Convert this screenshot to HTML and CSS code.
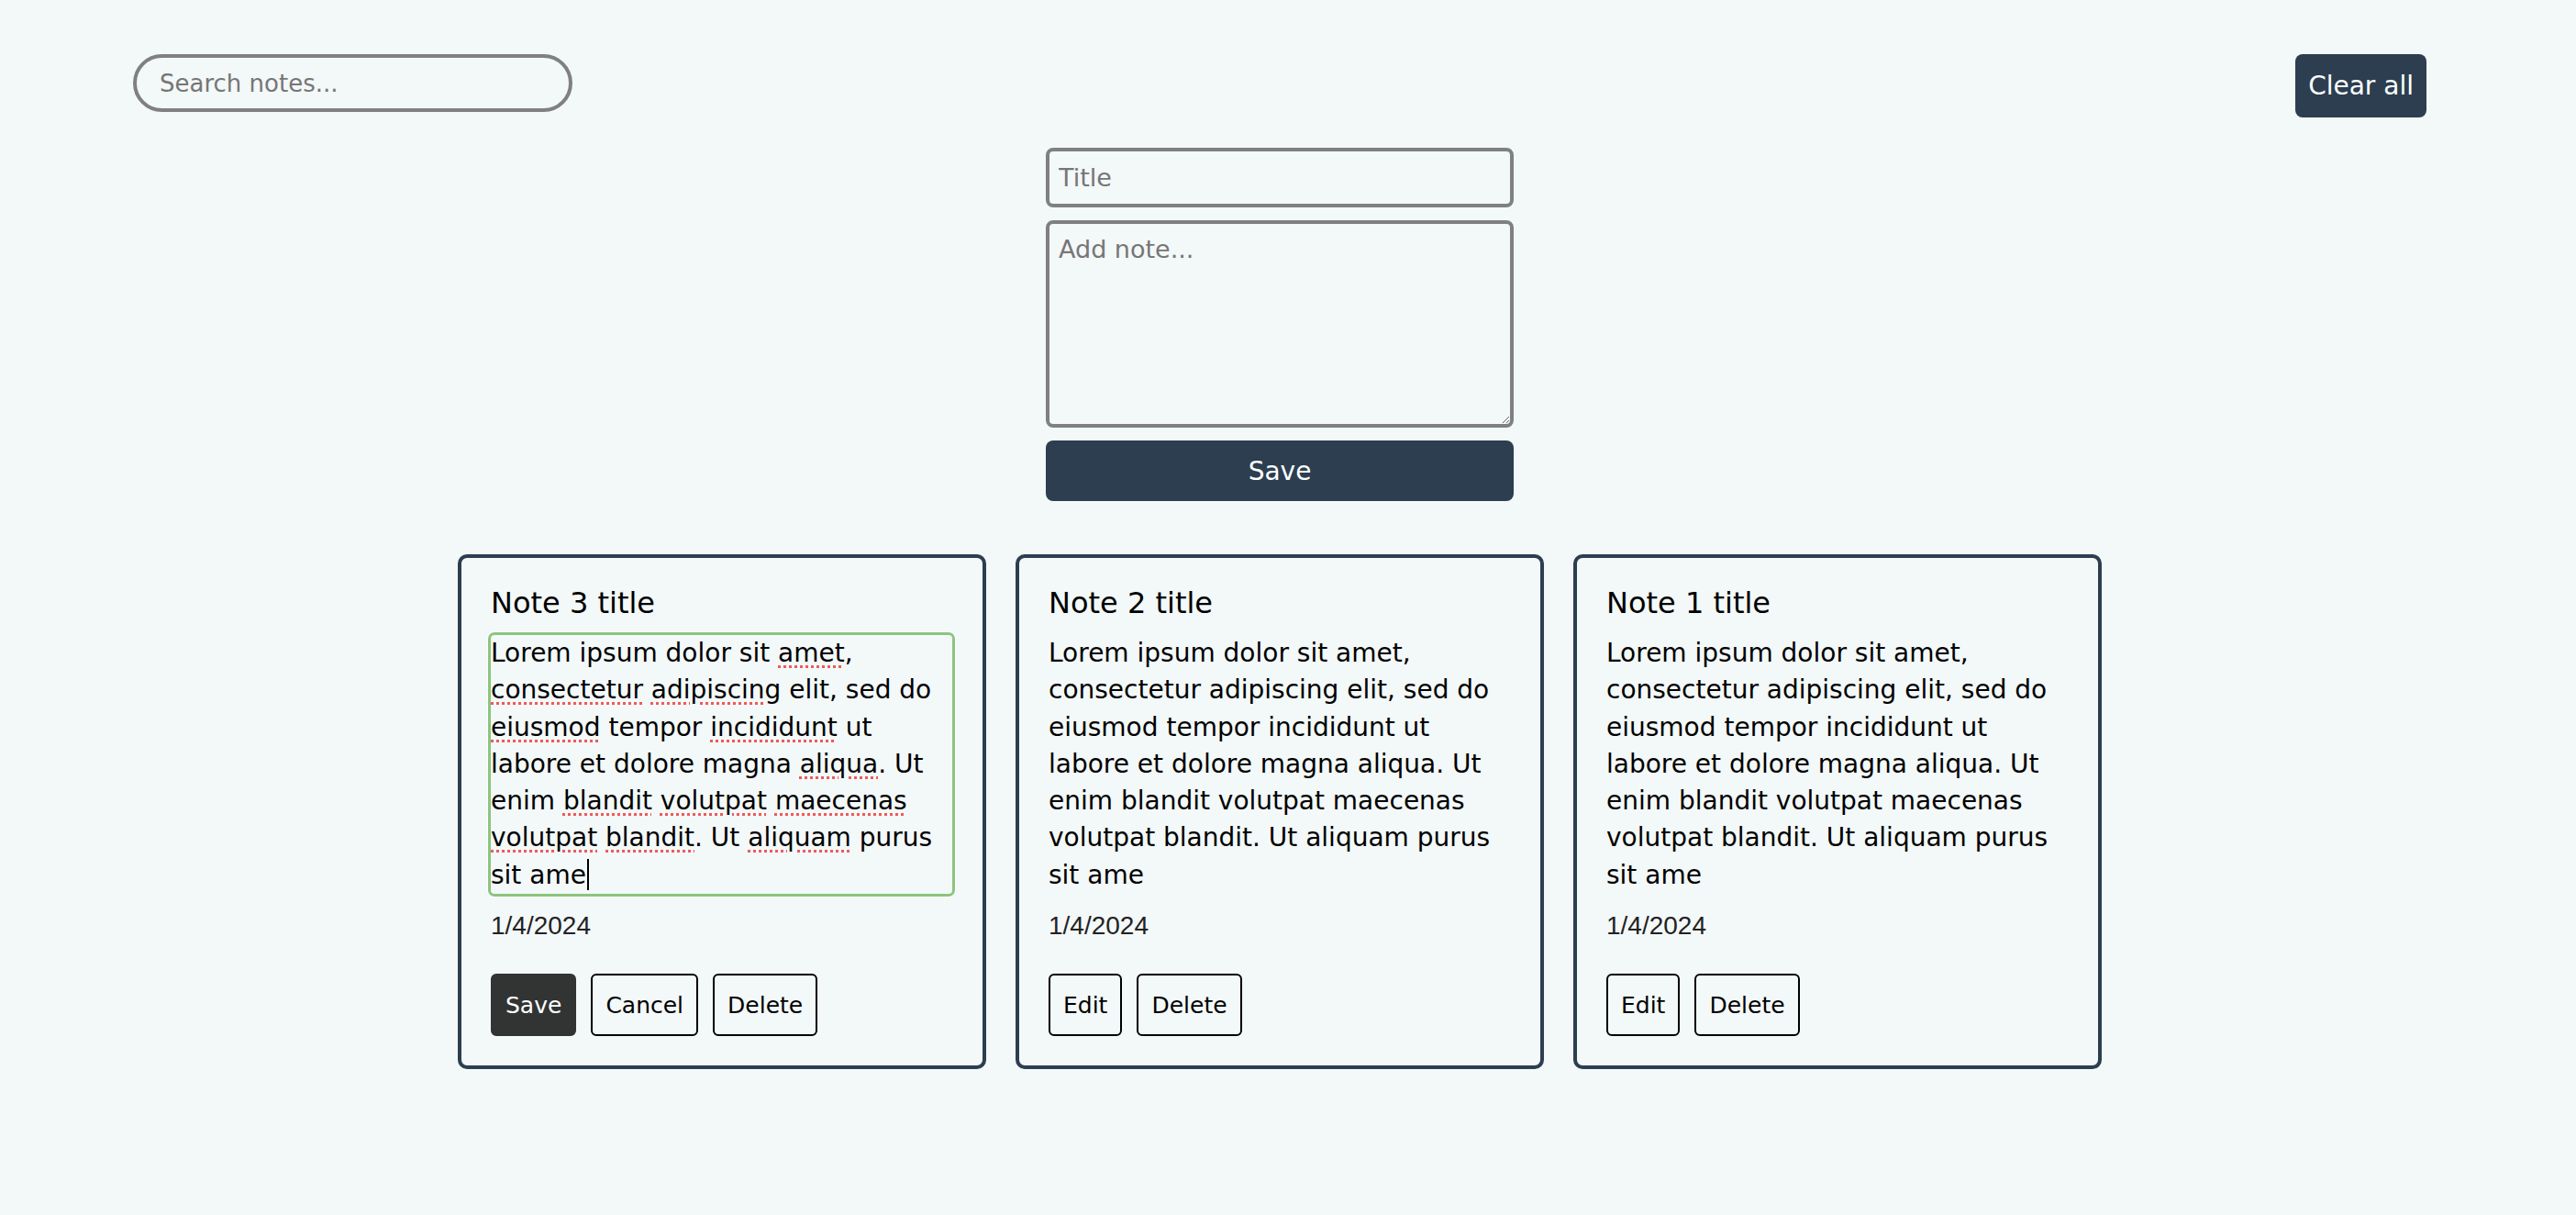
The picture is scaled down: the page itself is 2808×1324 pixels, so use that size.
FILE: index.html
```html
<!DOCTYPE html>
<html lang="en">
<head>
    <meta charset="UTF-8">
    <meta name="viewport" content="width=device-width, initial-scale=1.0">
    <title>Notes</title>
    <link rel="stylesheet" href="styles.css">
</head>
<body>

    <div class="app">
        <div class="topbar">
            <input type="text" class="search" placeholder="Search notes..." autocomplete="off">
            <button class="clear-btn">Clear all</button>
        </div>

        <div class="note-form">
            <input type="text" class="title-input" placeholder="Title">
            <textarea class="note-input" placeholder="Add note..."></textarea>
            <button class="save-btn">Save</button>
        </div>

        <div class="notes">
            <div class="note">
                <h3 class="note-title">Note 3 title</h3>
                <div class="note-text editing">Lorem ipsum dolor sit <span class="typo">amet</span>, <span class="typo">consectetur</span> <span class="typo">adipiscing</span> elit, sed do <span class="typo">eiusmod</span> tempor <span class="typo">incididunt</span> ut labore et dolore magna <span class="typo">aliqua</span>. Ut enim <span class="typo">blandit</span> <span class="typo">volutpat</span> <span class="typo">maecenas</span> <span class="typo">volutpat</span> <span class="typo">blandit</span>. Ut <span class="typo">aliquam</span> purus sit ame<span class="caret"></span></div>
                <p class="note-date">1/4/2024</p>
                <div class="note-actions">
                    <button class="btn btn-dark">Save</button>
                    <button class="btn">Cancel</button>
                    <button class="btn">Delete</button>
                </div>
            </div>
            <div class="note">
                <h3 class="note-title">Note 2 title</h3>
                <div class="note-text">Lorem ipsum dolor sit amet, consectetur adipiscing elit, sed do eiusmod tempor incididunt ut labore et dolore magna aliqua. Ut enim blandit volutpat maecenas volutpat blandit. Ut aliquam purus sit ame</div>
                <p class="note-date">1/4/2024</p>
                <div class="note-actions">
                    <button class="btn">Edit</button>
                    <button class="btn">Delete</button>
                </div>
            </div>
            <div class="note">
                <h3 class="note-title">Note 1 title</h3>
                <div class="note-text">Lorem ipsum dolor sit amet, consectetur adipiscing elit, sed do eiusmod tempor incididunt ut labore et dolore magna aliqua. Ut enim blandit volutpat maecenas volutpat blandit. Ut aliquam purus sit ame</div>
                <p class="note-date">1/4/2024</p>
                <div class="note-actions">
                    <button class="btn">Edit</button>
                    <button class="btn">Delete</button>
                </div>
            </div>
        </div>
    </div>

</body>
</html>
```

FILE: styles.css
```css
* {
    margin: 0;
    padding: 0;
    box-sizing: border-box;
    font-family: 'DejaVu Sans', sans-serif;
}
body {
    background-color: #f3f8f8;
    color: #000;
}
.app {
    margin-right: 18px;
    padding: 59px 145px 0;
}
.topbar {
    display: flex;
    justify-content: space-between;
    align-items: flex-start;
}
.search {
    width: 479px;
    height: 63px;
    border: 4px solid #808080;
    border-radius: 40px;
    padding: 0 25px;
    background: transparent;
    outline: 0;
    font-size: 26px;
    color: #333;
}
.search::placeholder,
.title-input::placeholder,
.note-input::placeholder {
    color: #767676;
}
.clear-btn {
    height: 69px;
    padding: 0 14px;
    border: 0;
    border-radius: 8px;
    background: #2c3e50;
    color: #fff;
    font-size: 28px;
    cursor: pointer;
}

/* add note form */
.note-form {
    width: 510px;
    margin: 33px auto 0;
    display: flex;
    flex-direction: column;
    gap: 14px;
}
.title-input,
.note-input {
    width: 100%;
    border: 4px solid #808080;
    border-radius: 8px;
    background: transparent;
    outline: 0;
    font-size: 27px;
    color: #333;
}
.title-input {
    height: 65px;
    padding: 0 10px;
}
.note-input {
    height: 226px;
    padding: 12px 10px;
}
.save-btn {
    height: 66px;
    border: 0;
    border-radius: 8px;
    background: #2c3e50;
    color: #fff;
    font-size: 28px;
    cursor: pointer;
}

/* notes list */
.notes {
    display: grid;
    grid-template-columns: repeat(3, 576px);
    justify-content: center;
    gap: 32px;
    margin-top: 58px;
}
.note {
    border: 4px solid #2c3e50;
    border-radius: 10px;
    padding: 30px 33px 32px 32px;
}
.note-title {
    font-size: 32px;
    font-weight: normal;
    margin-bottom: 16px;
}
.note-text {
    font-size: 28px;
    line-height: 40.3px;
}
.note-text.editing {
    border-radius: 4px;
    outline: 3px solid #8bc57f;
    box-shadow: 0 0 0 4px #fff;
}
.typo {
    text-decoration: underline dotted #f05a5a;
    text-decoration-thickness: 3px;
    text-underline-offset: 4px;
}
.caret {
    display: inline-block;
    width: 2px;
    height: 34px;
    margin-left: 1px;
    background: #000;
    vertical-align: -7px;
}
.note-date {
    margin-top: 15px;
    font-family: 'Liberation Sans', sans-serif;
    font-size: 28px;
    line-height: 40.3px;
    color: #222;
}
.note-actions {
    display: flex;
    gap: 16px;
    margin-top: 32px;
}
.btn {
    height: 68px;
    padding: 0 14px;
    border: 2px solid #000;
    border-radius: 6px;
    background: transparent;
    color: #000;
    font-size: 25px;
    cursor: pointer;
}
.btn-dark {
    background: #323433;
    border-color: #323433;
    color: #fff;
}
```
